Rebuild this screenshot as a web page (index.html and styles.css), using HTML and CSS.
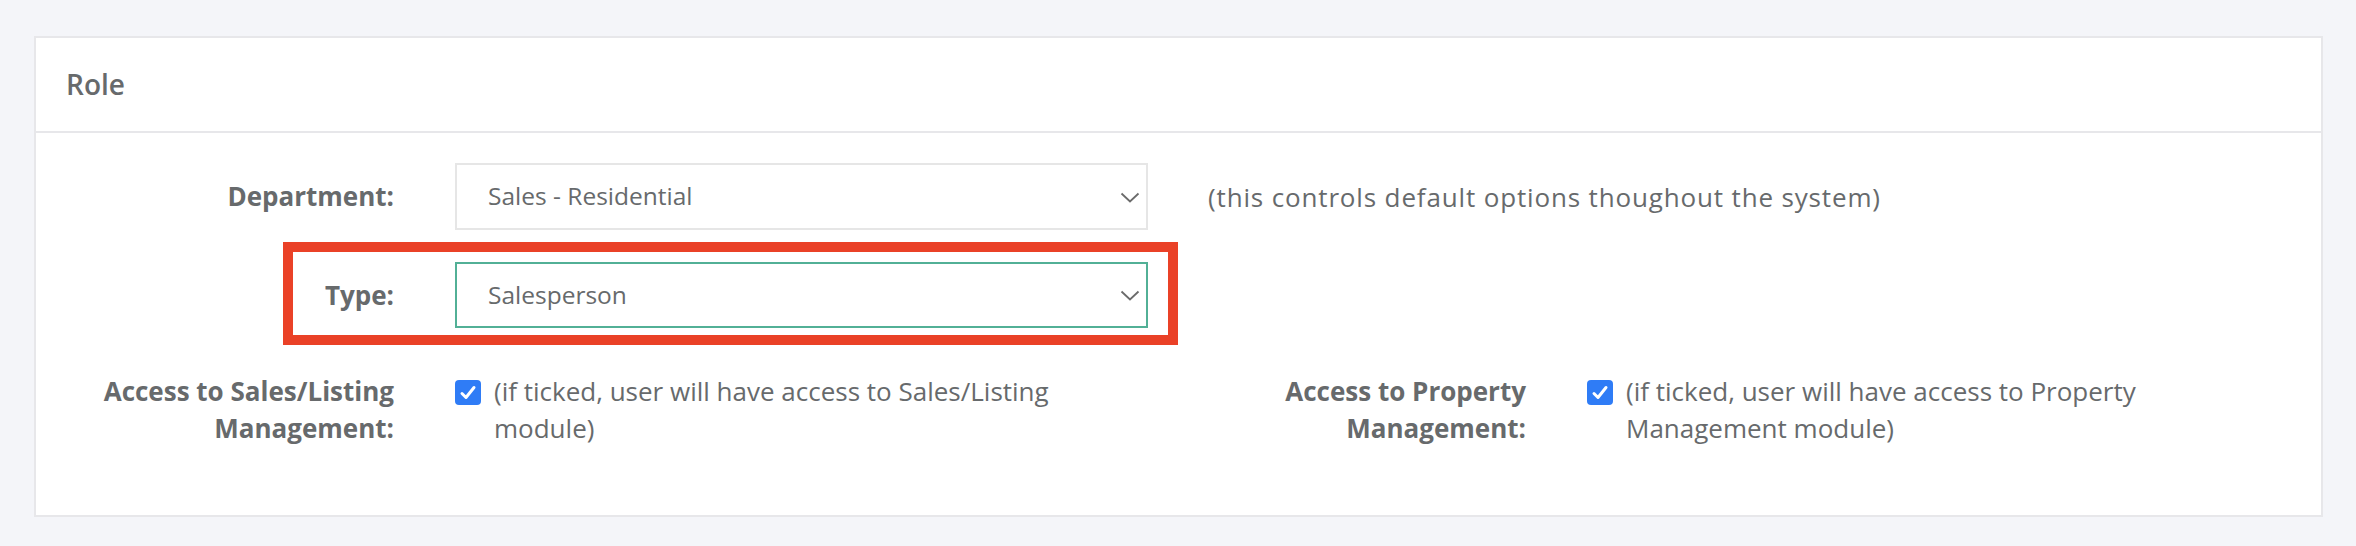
FILE: index.html
```html
<!DOCTYPE html>
<html lang="en">
<head>
<meta charset="utf-8">
<title>Role</title>
<link rel="stylesheet" href="styles.css">
</head>
<body>
<div class="page">
  <section class="card">
    <header class="card-header">Role</header>
    <div class="card-body">
      <div class="row">
        <label class="label">Department:</label>
        <div class="select">
          <span class="select-value">Sales - Residential</span>
          <svg class="chevron" width="20" height="12" viewBox="0 0 20 12"><path d="M1.5 1.5 L10 9.5 L18.5 1.5" fill="none" stroke="#6b6b6b" stroke-width="1.8"/></svg>
        </div>
        <span class="help">(this controls default options thoughout the system)</span>
      </div>
      <div class="row row-type">
        <label class="label">Type:</label>
        <div class="select select-focus">
          <span class="select-value">Salesperson</span>
          <svg class="chevron" width="20" height="12" viewBox="0 0 20 12"><path d="M1.5 1.5 L10 9.5 L18.5 1.5" fill="none" stroke="#6b6b6b" stroke-width="1.8"/></svg>
        </div>
        <div class="highlight"></div>
      </div>
      <div class="access">
        <div class="access-item">
          <label class="label label-multi">Access to Sales/Listing<br>Management:</label>
          <div class="check-wrap">
            <span class="checkbox"><svg width="18" height="16" viewBox="0 0 18 16"><path d="M3 8.5 L7 12.5 L15 2.5" fill="none" stroke="#fff" stroke-width="3" stroke-linecap="round" stroke-linejoin="round"/></svg></span>
            <span class="check-text">(if ticked, user will have access to Sales/Listing module)</span>
          </div>
        </div>
        <div class="access-item">
          <label class="label label-multi">Access to Property<br>Management:</label>
          <div class="check-wrap">
            <span class="checkbox"><svg width="18" height="16" viewBox="0 0 18 16"><path d="M3 8.5 L7 12.5 L15 2.5" fill="none" stroke="#fff" stroke-width="3" stroke-linecap="round" stroke-linejoin="round"/></svg></span>
            <span class="check-text">(if ticked, user will have access to Property Management module)</span>
          </div>
        </div>
      </div>
    </div>
  </section>
</div>
</body>
</html>
```

FILE: styles.css
```css
* { box-sizing: border-box; }
html, body {
  margin: 0;
  padding: 0;
  background: #f4f5f9;
}
body {
  font-family: "Open Sans", "Liberation Sans", sans-serif;
  color: #676a6c;
  font-size: 26px;
}
.page {
  padding: 36px 33px 29px 34px;
}
.card {
  background: #fff;
  border: 2px solid #e7e7ea;
}
.card-header {
  height: 95px;
  display: flex;
  align-items: center;
  padding-left: 30px;
  font-size: 28px;
  font-weight: 600;
  border-bottom: 2px solid #e7e7ea;
  padding-bottom: 2px;
}
.card-body {
  padding: 30px 0 68px 0;
}
.row {
  display: grid;
  grid-template-columns: 358px 693px auto;
  column-gap: 61px;
  align-items: center;
  position: relative;
}
.row + .row { margin-top: 32px; }
.label {
  text-align: right;
  font-weight: 700;
  line-height: 37px;
}
.select {
  height: 67px;
  border: 2px solid #e6e6e6;
  display: flex;
  align-items: center;
  justify-content: space-between;
  padding: 0 6px 0 31px;
  background: #fff;
  font-size: 24.5px;
}
.select-focus {
  border-color: #52b096;
  height: 66px;
}
.select-value { line-height: 1; }
.chevron { display: block; margin-top: 2px; }
.help {
  margin-left: -1px;
  letter-spacing: 0.85px;
}
.highlight {
  position: absolute;
  left: 247px;
  top: -20px;
  width: 895px;
  height: 103px;
  border: 10px solid #ea4127;
  pointer-events: none;
}
.access {
  margin-top: 45px;
  display: grid;
  grid-template-columns: 1132px 1132px;
}
.access-item {
  display: grid;
  grid-template-columns: 358px 1fr;
  column-gap: 61px;
  align-items: start;
}
.check-wrap {
  display: flex;
  align-items: flex-start;
  gap: 13px;
  line-height: 37px;
}
.checkbox {
  flex: none;
  width: 26px;
  height: 25px;
  margin-top: 7px;
  border-radius: 4px;
  background: #2f7cf6;
  display: flex;
  align-items: center;
  justify-content: center;
}
.checkbox svg { display: block; }
.check-text {
  max-width: 620px;
}
```
